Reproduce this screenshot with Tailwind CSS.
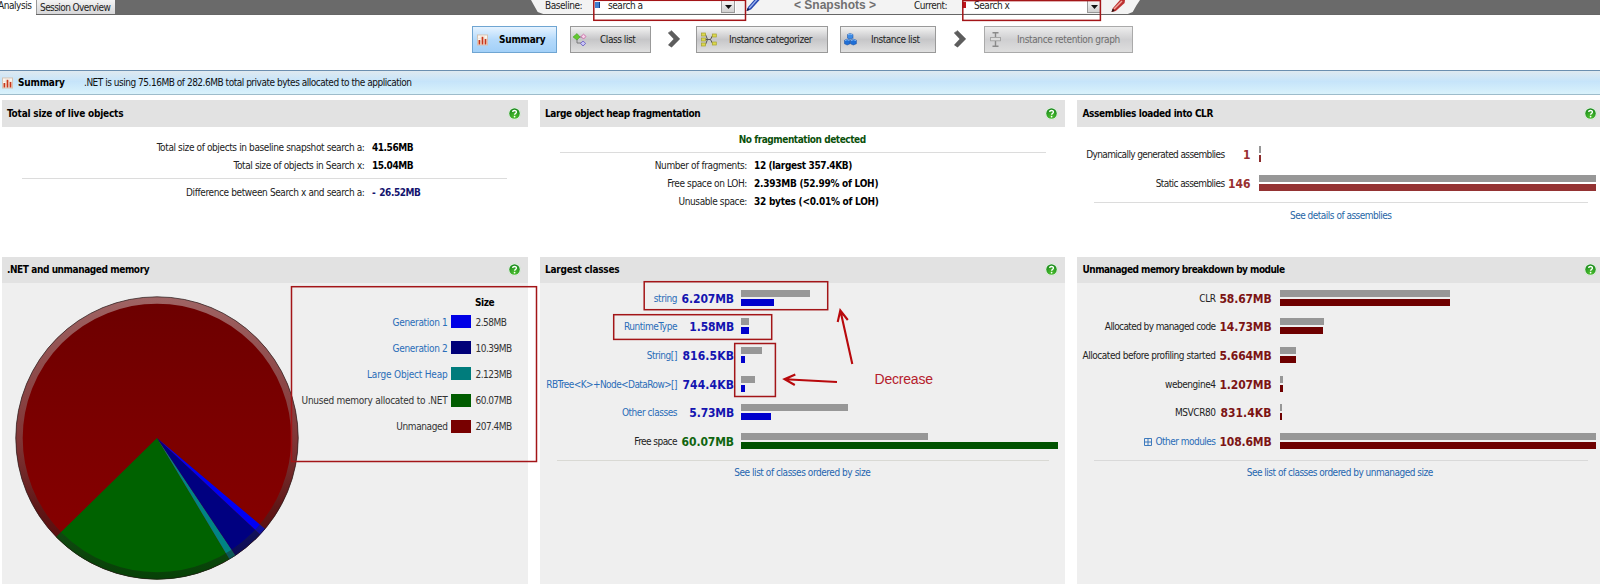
<!DOCTYPE html>
<html lang="en">
<head>
<meta charset="utf-8">
<title>Session Overview</title>
<script src="https://cdn.jsdelivr.net/npm/@tailwindcss/browser@4"></script>
</head>
<body class="relative h-[584px] w-[1600px] overflow-hidden bg-white font-['DejaVu_Sans_Condensed','DejaVu_Sans',sans-serif] text-[10px] leading-[14px] tracking-[-0.45px] whitespace-nowrap text-[#222]">

<svg class="absolute size-0">
  <defs>
    <radialGradient id="hg" cx=".5" cy=".8" r=".8"><stop offset="0" stop-color="#4fc22f"/><stop offset="1" stop-color="#17861c"/></radialGradient>
    <symbol id="help" viewBox="0 0 14 14">
      <circle cx="7" cy="7" r="6.6" fill="#fff" stroke="#b9d9b9" stroke-width=".5"/>
      <circle cx="7" cy="7" r="5.7" fill="url(#hg)"/>
      <path d="M5 5.5C5 3.2 9.1 3.2 9.1 5.4C9.1 6.9 7.1 6.8 7.1 8.4" fill="none" stroke="#fff" stroke-width="1.4"/>
      <circle cx="7.1" cy="10.3" r=".9" fill="#fff"/>
    </symbol>
    <symbol id="chart" viewBox="0 0 12 12">
      <rect x=".5" y=".5" width="11" height="11" fill="#fbf6f0" stroke="#d3bfae"/>
      <path d="M.5 4.2H11.5M.5 8H11.5M4.2 .5V11.5M8 .5V11.5" stroke="#e6d8cc" stroke-width=".6"/>
      <path d="M2.6 11V6M6 11V2.5M9.3 11V4.8" stroke="#c8371b" stroke-width="1.9"/>
    </symbol>
    <symbol id="chev" viewBox="0 0 14 18">
      <path d="M1 3L4.6 .6L13 9L4.6 17.4L1 15L6.6 9Z" fill="#5d5d5d"/>
      <path d="M1 3L4.6 .6L13 9" fill="none" stroke="#8b8b8b" stroke-width=".7"/>
    </symbol>
  </defs>
</svg>

<!-- Tab strip and snapshot selector -->
<header class="flex h-[15px] items-start border-b border-[#666] bg-[#6a6a6a]">
  <div class="flex h-[15px] w-9 items-start bg-white"><span class="-ml-[2px] -mt-[1px]">Analysis</span></div>
  <div class="h-[14px] w-[79px] border-l border-[#999] bg-gradient-to-b from-[#f4f4f4] to-[#d6d6d8] pl-[3px]"><span class="block pt-px leading-[13px] tracking-[-0.58px]">Session Overview</span></div>
  <div class="ml-[416px] flex h-[14px] w-[609px] items-start bg-[#f3f3f3] pl-[14px] [clip-path:polygon(0_0,100%_0,99.4%_40%,98.8%_85%,98%_100%,2%_100%,1.1%_85%,.5%_40%)]">
    <span class="w-[49px] -mt-[1px]">Baseline:</span>
    <div class="flex h-[13px] w-[142px] bg-white">
      <span class="ml-[1px] mt-[2px] h-[6px] w-[5px] border-r border-[#123f86] bg-[#3f7fd0]"></span>
      <span class="-mt-[1px] ml-[8px] w-[113px]">search a</span>
      <span class="flex h-[13px] w-[14px] items-center justify-center border border-[#999] bg-gradient-to-b from-[#f6f6f6] to-[#d0d0d0]"><svg width="7" height="4"><path d="M0 0H7L3.5 4Z" fill="#111"/></svg></span>
    </div>
    <svg class="ml-[10px]" width="15" height="12" viewBox="0 0 15 12"><path d="M.5 11L2 7L9 -1L14.5 -1L5 9.4Z" fill="#2747b0"/><path d="M3.2 8.2L11 -.5" stroke="#9db5ee" stroke-width="1.3"/><path d="M.5 11L1.6 8L3.6 9.9Z" fill="#111a44"/></svg>
    <span class="ml-[33px] -mt-[2px] w-[119px] font-['Liberation_Sans'] text-[12px] font-bold tracking-normal text-[#707070]">&lt; Snapshots &gt;</span>
    <span class="ml-px w-[48px] -mt-[1px]">Current:</span>
    <div class="flex h-[13px] w-[139px] bg-white">
      <span class="mt-[2px] h-[6px] w-[4px] bg-[#c0141c]"></span>
      <span class="-mt-[1px] ml-[8px] w-[113px]">Search x</span>
      <span class="flex h-[13px] w-[14px] items-center justify-center border border-[#999] bg-gradient-to-b from-[#f6f6f6] to-[#d0d0d0]"><svg width="7" height="4"><path d="M0 0H7L3.5 4Z" fill="#111"/></svg></span>
    </div>
    <svg class="ml-[10px]" width="15" height="13" viewBox="0 0 15 13"><path d="M.5 12L2 8L9 0L14 0L13.6 3L4.8 11Z" fill="#bd3030"/><path d="M3 9L11 1" stroke="#f0a9a0" stroke-width="1.4"/><path d="M.5 12L1.7 8.6L3.9 10.9Z" fill="#2c1414"/></svg>
  </div>
</header>

<!-- Navigation -->
<nav class="flex h-[55px] items-start pl-[472px] pt-[11px] text-[#222]">
  <div class="flex h-[27px] w-[85px] items-center border border-[#6fa5d2] bg-gradient-to-b from-[#e6f3ff] via-[#b5dafb] to-[#a2d0f8] pl-[4px] font-bold tracking-[-0.25px] text-black"><svg width="11" height="12"><use href="#chart"/></svg><span class="ml-[11px] mt-px">Summary</span></div>
  <div class="ml-[13px] flex h-[27px] w-[81px] items-center border border-[#999] bg-gradient-to-b from-[#f3f3f3] via-[#c6c6c8] to-[#e0e0e0] pl-[2px]">
    <svg width="14" height="14" viewBox="0 0 14 14"><path d="M4 4V10H9M4 4H10" fill="none" stroke="#666" stroke-width=".8"/><path d="M0 4L4 .5L7 4L4 7Z" fill="#63c82f" stroke="#3f9b22" stroke-width=".5"/><path d="M8 3.5L10.5 1.2L13 3.5L10.5 6Z" fill="#f7d3ea" stroke="#c65ea0" stroke-width=".8"/><path d="M7.5 10.4L10 8L12.7 10.4L10 13Z" fill="#c8c3f5" stroke="#6558c0" stroke-width=".8"/></svg>
    <span class="ml-[13px] mt-px">Class list</span></div>
  <svg class="ml-[16px] mt-[4px]" width="14" height="18"><use href="#chev"/></svg>
  <div class="ml-[15px] flex h-[27px] w-[132px] items-center border border-[#999] bg-gradient-to-b from-[#f3f3f3] via-[#c6c6c8] to-[#e0e0e0] pl-[4px]">
    <svg width="16" height="15" viewBox="0 0 16 15"><path d="M4.5 2.5L6.5 7.5L4.5 12.5M4.5 7.5H9.5L11.5 3.5M9.5 7.5L11.5 11.5" fill="none" stroke="#555" stroke-width="1"/><g fill="#dbd84e" stroke="#a5a12e" stroke-width=".7"><rect x=".5" y="1" width="4" height="3"/><rect x=".5" y="6" width="4" height="3"/><rect x=".5" y="11" width="4" height="3"/><rect x="11.3" y="2" width="4" height="3"/><rect x="11.3" y="10" width="4" height="3"/></g></svg>
    <span class="ml-[12px] mt-px">Instance categorizer</span></div>
  <div class="ml-[12px] flex h-[27px] w-[96px] items-center border border-[#999] bg-gradient-to-b from-[#f3f3f3] via-[#c6c6c8] to-[#e0e0e0] pl-[3px]">
    <svg width="13" height="13" viewBox="0 0 13 13"><g stroke="#1149a0" stroke-width=".5"><path d="M3.5 1.5L6 .4L9 1.5V5L6 6.3L3.5 5Z" fill="#3c8be6"/><path d="M.5 7.3L3.2 6L6 7.3V10.8L3.2 12L.5 10.8Z" fill="#1f6fd6"/><path d="M6.5 7.3L9.3 6L12.4 7.3V10.8L9.3 12L6.5 10.8Z" fill="#1f6fd6"/></g><path d="M4 1.8L6 1L8.5 1.8M1 7.6L3.2 6.7L5.5 7.6M7 7.6L9.3 6.7L12 7.6" stroke="#9cc9fa" stroke-width=".8" fill="none"/></svg>
    <span class="ml-[14px] mt-px">Instance list</span></div>
  <svg class="ml-[17px] mt-[4px]" width="14" height="18"><use href="#chev"/></svg>
  <div class="ml-[17px] flex h-[27px] w-[149px] items-center border border-[#aaa] bg-gradient-to-b from-[#ededed] via-[#cfcfd1] to-[#dedede] pl-[5px] text-[#6e6e6e]">
    <svg width="11" height="15" viewBox="0 0 11 15"><path d="M2.5 .8H8.5M5.5 .8V5M5.5 9V14M2.5 14.2H8.5" stroke="#8a8a8a" stroke-width="1.4"/><rect x=".6" y="5.4" width="9.8" height="3.4" fill="#ddd" stroke="#999" stroke-width=".8"/></svg>
    <span class="ml-[16px] mt-px tracking-[-0.35px]">Instance retention graph</span></div>
</nav>

<!-- Summary strip -->
<div class="flex h-[25px] items-center border-y border-t-[#6c8fb0] border-b-[#9dbccb] bg-gradient-to-b from-[#dfe9f0] via-[#c6e4fa] via-45% to-[#d9f2fb] pl-[2px] text-[#111]">
  <svg width="11" height="12"><use href="#chart"/></svg>
  <b class="ml-[5px] w-[66px] tracking-[-0.2px] text-black">Summary</b>
  <span class="tracking-[-0.48px]">.NET is using 75.16MB of 282.6MB total private bytes allocated to the application</span>
</div>

<main class="grid w-[1604px] grid-cols-[525.5px_525.5px_525.5px] grid-rows-[156.7px_327.3px] gap-x-[12px] pl-[2px] pt-[5px]">

  <section>
    <h2 class="flex h-[27px] items-center justify-between bg-[#e2e2e2] pl-[5px] pr-[7px] font-bold tracking-[-0.21px] text-black">Total size of live objects<svg width="13" height="13"><use href="#help"/></svg></h2>
    <div class="flex flex-col pt-[12px]">
      <div class="flex h-[18px] items-center"><span class="w-[362.5px] text-right tracking-[-0.38px]">Total size of objects in baseline snapshot search a:</span><b class="ml-[7.5px] text-black">41.56MB</b></div>
      <div class="flex h-[18px] items-center"><span class="w-[362.5px] text-right tracking-[-0.38px]">Total size of objects in Search x:</span><b class="ml-[7.5px] text-black">15.04MB</b></div>
      <div class="ml-[20px] mt-[3px] h-px w-[485px] bg-[#dcdcdc]"></div>
      <div class="mt-[5px] flex h-[18px] items-center"><span class="w-[362.5px] text-right tracking-[-0.38px]">Difference between Search x and search a:</span><b class="ml-[7.5px] text-[#14146e]">-<span class="ml-[4px]">26.52MB</span></b></div>
    </div>
  </section>

  <section>
    <h2 class="flex h-[27px] items-center justify-between bg-[#e2e2e2] pl-[5.5px] pr-[7px] font-bold tracking-[-0.4px] text-black">Large object heap fragmentation<svg width="13" height="13"><use href="#help"/></svg></h2>
    <div class="flex flex-col pt-[3px]">
      <b class="h-[18px] pt-px text-center leading-[18px] text-[#0b500b]">No fragmentation detected</b>
      <div class="ml-[20px] mt-[4px] h-px w-[486px] bg-[#dcdcdc]"></div>
      <div class="mt-[4px] flex h-[18px] items-center"><span class="w-[207.5px] text-right tracking-[-0.38px]">Number of fragments:</span><b class="ml-[7px] tracking-[-0.35px] text-black">12 (largest 357.4KB)</b></div>
      <div class="flex h-[18px] items-center"><span class="w-[207.5px] text-right tracking-[-0.38px]">Free space on LOH:</span><b class="ml-[7px] tracking-[-0.25px] text-black">2.393MB (52.99% of LOH)</b></div>
      <div class="flex h-[18px] items-center"><span class="w-[207.5px] text-right tracking-[-0.38px]">Unusable space:</span><b class="ml-[7px] tracking-[-0.25px] text-black">32 bytes (&lt;0.01% of LOH)</b></div>
    </div>
  </section>

  <section>
    <h2 class="flex h-[27px] items-center justify-between bg-[#e2e2e2] pl-[5.5px] pr-[6px] font-bold tracking-[-0.37px] text-black">Assemblies loaded into CLR<svg width="13" height="13"><use href="#help"/></svg></h2>
    <div class="flex flex-col pt-[13px]">
      <div class="flex h-[28.67px] items-center"><span class="mt-[2px] w-[147.5px] text-right tracking-[-0.61px]">Dynamically generated assemblies</span><b class="mt-[2px] w-[26px] text-right text-[12px] tracking-normal text-[#983030]">1</b><div class="ml-[8.5px] flex flex-col gap-[2px]"><i class="h-[7px] w-[2px] bg-[#979797]"></i><i class="h-[7px] w-[2px] bg-[#8b2c2c]"></i></div></div>
      <div class="flex h-[28.67px] items-center"><span class="mt-[2px] w-[147.5px] text-right tracking-[-0.58px]">Static assemblies</span><b class="mt-[2px] w-[26px] text-right text-[12px] tracking-normal text-[#983030]">146</b><div class="ml-[8.5px] flex flex-col gap-[2px]"><i class="h-[7px] w-[337px] bg-[#979797]"></i><i class="h-[7px] w-[337px] bg-[#943333]"></i></div></div>
      <div class="ml-[17px] mt-[5px] h-px w-[494px] bg-[#dcdcdc]"></div>
      <a class="mt-[4px] h-[18px] pl-[2px] text-center leading-[18px] tracking-[-0.5px] text-[#1f66a6]">See details of assemblies</a>
    </div>
  </section>

  <section class="bg-[#efefef]">
    <h2 class="flex h-[26px] items-center justify-between bg-[#e2e2e2] pl-[5px] pr-[7px] font-bold tracking-[-0.42px] text-black"><span class="mt-px">.NET and unmanaged memory</span><svg width="13" height="13"><use href="#help"/></svg></h2>
    <div class="flex">
      <svg class="ml-[12px] mt-[12px] shrink-0" width="286" height="286" viewBox="-143 -143 286 286">
        <defs>
          <linearGradient id="red" x1="0" y1="0" x2="0" y2="1"><stop offset="0" stop-color="#6c0000"/><stop offset=".45" stop-color="#7b0000"/><stop offset="1" stop-color="#8a0000"/></linearGradient>
          <linearGradient id="ring" x1="0" y1="0" x2="0" y2="1"><stop offset="0" stop-color="#ddd" stop-opacity=".45"/><stop offset=".5" stop-color="#888" stop-opacity=".4"/><stop offset=".75" stop-color="#333" stop-opacity=".45"/><stop offset="1" stop-color="#111" stop-opacity=".4"/></linearGradient>
        </defs>
        <circle r="141.3" fill="url(#red)"/>
        <path d="M0 0L-101 99A141.3 141.3 0 0 0 72.5 121.3Z" fill="#006200"/>
        <path d="M0 0L72.5 121.3A141.3 141.3 0 0 0 78.5 117.5Z" fill="#008484"/>
        <path d="M0 0L78.5 117.5A141.3 141.3 0 0 0 103.2 96.5Z" fill="#000080"/>
        <path d="M0 0L103.2 96.5A141.3 141.3 0 0 0 108.2 91Z" fill="#0000f4"/>
        <circle r="137.8" fill="none" stroke="url(#ring)" stroke-width="7"/>
        <circle r="141.2" fill="none" stroke="#201818" stroke-opacity=".65"/>
      </svg>
      <div class="-ml-[2px] flex w-[227px] flex-col pt-[13px] tracking-[-0.26px] text-[#333]">
        <b class="ml-[177px] h-[13px] tracking-[-0.45px] text-black">Size</b>
        <div class="flex h-[26.1px] items-center"><span class="mt-[2px] w-[149.5px] text-right tracking-[-0.32px] text-[#2a6db8]">Generation 1</span><i class="ml-[3.5px] h-[13px] w-[20px] bg-[#0000e6]"></i><span class="ml-[4.5px] mt-[2px] tracking-[-0.5px]">2.58MB</span></div>
        <div class="flex h-[26.1px] items-center"><span class="mt-[2px] w-[149.5px] text-right tracking-[-0.32px] text-[#2a6db8]">Generation 2</span><i class="ml-[3.5px] h-[13px] w-[20px] bg-[#000078]"></i><span class="ml-[4.5px] mt-[2px] tracking-[-0.5px]">10.39MB</span></div>
        <div class="flex h-[26.1px] items-center"><span class="mt-[2px] w-[149.5px] text-right tracking-[-0.2px] text-[#2a6db8]">Large Object Heap</span><i class="ml-[3.5px] h-[13px] w-[20px] bg-[#007c7c]"></i><span class="ml-[4.5px] mt-[2px] tracking-[-0.5px]">2.123MB</span></div>
        <div class="flex h-[26.1px] items-center"><span class="mt-[2px] w-[149.5px] text-right">Unused memory allocated to .NET</span><i class="ml-[3.5px] h-[13px] w-[20px] bg-[#005c00]"></i><span class="ml-[4.5px] mt-[2px] tracking-[-0.5px]">60.07MB</span></div>
        <div class="flex h-[26.1px] items-center"><span class="mt-[2px] w-[149.5px] text-right tracking-[-0.4px]">Unmanaged</span><i class="ml-[3.5px] h-[13px] w-[20px] bg-[#780000]"></i><span class="ml-[4.5px] mt-[2px] tracking-[-0.5px]">207.4MB</span></div>
      </div>
    </div>
  </section>

  <section class="bg-[#efefef]">
    <h2 class="flex h-[26px] items-center justify-between bg-[#e2e2e2] pl-[5.5px] pr-[7px] font-bold tracking-[-0.26px] text-black"><span class="mt-px">Largest classes</span><svg width="13" height="13"><use href="#help"/></svg></h2>
    <div class="flex flex-col pt-[0.6px]">
      <div class="flex h-[28.7px] items-center"><span class="mt-[2px] w-[137.5px] text-right text-[#2a6db8]">string</span><b class="mt-[2px] w-[57px] text-right text-[12px] tracking-[-0.1px] text-[#1414b0]">6.207MB</b><div class="ml-[7px] flex flex-col gap-[2px]"><i class="h-[7px] w-[69px] bg-[#979797]"></i><i class="h-[7px] w-[33px] bg-[#0000cc]"></i></div></div>
      <div class="flex h-[28.7px] items-center"><span class="mt-[2px] w-[137.5px] text-right text-[#2a6db8]">RuntimeType</span><b class="mt-[2px] w-[57px] text-right text-[12px] tracking-[-0.16px] text-[#1414b0]">1.58MB</b><div class="ml-[7px] flex flex-col gap-[2px]"><i class="h-[7px] w-[8px] bg-[#979797]"></i><i class="h-[7px] w-[8px] bg-[#0000cc]"></i></div></div>
      <div class="flex h-[28.7px] items-center"><span class="mt-[2px] w-[137.5px] text-right text-[#2a6db8]">String[]</span><b class="mt-[2px] w-[57px] text-right text-[12px] tracking-[0.12px] text-[#1414b0]">816.5KB</b><div class="ml-[7px] flex flex-col gap-[2px]"><i class="h-[7px] w-[21px] bg-[#979797]"></i><i class="h-[7px] w-[4px] bg-[#0000cc]"></i></div></div>
      <div class="flex h-[28.7px] items-center"><span class="mt-[2px] w-[137.5px] text-right tracking-[-0.58px] text-[#2a6db8]">RBTree&lt;K&gt;+Node&lt;DataRow&gt;[]</span><b class="mt-[2px] w-[57px] text-right text-[12px] tracking-[0.12px] text-[#1414b0]">744.4KB</b><div class="ml-[7px] flex flex-col gap-[2px]"><i class="h-[7px] w-[14px] bg-[#979797]"></i><i class="h-[7px] w-[4px] bg-[#0000cc]"></i></div></div>
      <div class="flex h-[28.7px] items-center"><span class="mt-[2px] w-[137.5px] text-right text-[#2a6db8]">Other classes</span><b class="mt-[2px] w-[57px] text-right text-[12px] tracking-[-0.16px] text-[#1414b0]">5.73MB</b><div class="ml-[7px] flex flex-col gap-[2px]"><i class="h-[7px] w-[107px] bg-[#979797]"></i><i class="h-[7px] w-[30px] bg-[#0000cc]"></i></div></div>
      <div class="flex h-[28.7px] items-center"><span class="mt-[2px] w-[137.5px] text-right tracking-[-0.55px]">Free space</span><b class="mt-[2px] w-[57px] text-right text-[12px] tracking-[-0.1px] text-[#0f650f]">60.07MB</b><div class="ml-[7px] flex flex-col gap-[2px]"><i class="h-[7px] w-[187px] bg-[#979797]"></i><i class="h-[7px] w-[317px] bg-[#005200]"></i></div></div>
      <div class="ml-[17px] mt-[5px] h-px w-[492px] bg-[#d9d9d4]"></div>
      <a class="mt-[3px] h-[18px] text-center leading-[18px] text-[#1f66b0]">See list of classes ordered by size</a>
    </div>
  </section>

  <section class="bg-[#efefef]">
    <h2 class="flex h-[26px] items-center justify-between bg-[#e2e2e2] pl-[5.5px] pr-[6px] font-bold tracking-[-0.52px] text-black"><span class="mt-px">Unmanaged memory breakdown by module</span><svg width="13" height="13"><use href="#help"/></svg></h2>
    <div class="flex flex-col pt-[0.6px]">
      <div class="flex h-[28.7px] items-center"><span class="mt-[2px] w-[138.5px] text-right">CLR</span><b class="mt-[2px] w-[56px] text-right text-[12px] tracking-[-0.16px] text-[#7c1414]">58.67MB</b><div class="ml-[8.5px] flex flex-col gap-[2px]"><i class="h-[7px] w-[170px] bg-[#979797]"></i><i class="h-[7px] w-[170px] bg-[#6e0000]"></i></div></div>
      <div class="flex h-[28.7px] items-center"><span class="mt-[2px] w-[138.5px] text-right tracking-[-0.6px]">Allocated by managed code</span><b class="mt-[2px] w-[56px] text-right text-[12px] tracking-[-0.16px] text-[#7c1414]">14.73MB</b><div class="ml-[8.5px] flex flex-col gap-[2px]"><i class="h-[7px] w-[44px] bg-[#979797]"></i><i class="h-[7px] w-[43px] bg-[#6e0000]"></i></div></div>
      <div class="flex h-[28.7px] items-center"><span class="mt-[2px] w-[138.5px] text-right">Allocated before profiling started</span><b class="mt-[2px] w-[56px] text-right text-[12px] tracking-[-0.16px] text-[#7c1414]">5.664MB</b><div class="ml-[8.5px] flex flex-col gap-[2px]"><i class="h-[7px] w-[16px] bg-[#979797]"></i><i class="h-[7px] w-[16px] bg-[#6e0000]"></i></div></div>
      <div class="flex h-[28.7px] items-center"><span class="mt-[2px] w-[138.5px] text-right">webengine4</span><b class="mt-[2px] w-[56px] text-right text-[12px] tracking-[-0.16px] text-[#7c1414]">1.207MB</b><div class="ml-[8.5px] flex flex-col gap-[2px]"><i class="h-[7px] w-[3px] bg-[#979797]"></i><i class="h-[7px] w-[3px] bg-[#6e0000]"></i></div></div>
      <div class="flex h-[28.7px] items-center"><span class="mt-[2px] w-[138.5px] text-right">MSVCR80</span><b class="mt-[2px] w-[56px] text-right text-[12px] tracking-[0.05px] text-[#7c1414]">831.4KB</b><div class="ml-[8.5px] flex flex-col gap-[2px]"><i class="h-[7px] w-[2px] bg-[#979797]"></i><i class="h-[7px] w-[2px] bg-[#6e0000]"></i></div></div>
      <div class="flex h-[28.7px] items-center"><span class="mt-[2px] flex w-[138.5px] items-center justify-end gap-[3px] tracking-[-0.52px] text-[#2a6db8]"><svg width="8" height="8" viewBox="0 0 8 8"><path d="M.5 .5H7.5V7.5H.5ZM4 .5V7.5M.5 4H7.5" fill="none" stroke="#2a6db8" stroke-width=".9"/></svg>Other modules</span><b class="mt-[2px] w-[56px] text-right text-[12px] tracking-[-0.16px] text-[#7c1414]">108.6MB</b><div class="ml-[8.5px] flex flex-col gap-[2px]"><i class="h-[7px] w-[316px] bg-[#979797]"></i><i class="h-[7px] w-[316px] bg-[#6e0000]"></i></div></div>
      <div class="ml-[17px] mt-[5px] h-px w-[494px] bg-[#d9d9d9]"></div>
      <a class="mt-[3px] h-[18px] text-center leading-[18px] tracking-[-0.5px] text-[#1f66b0]">See list of classes ordered by unmanaged size</a>
    </div>
  </section>
</main>

<!-- Annotations drawn over the page -->
<svg class="pointer-events-none absolute left-0 top-0" width="1600" height="584" fill="none" stroke="#a31518" stroke-width="1.5">
  <rect x="593.8" y=".3" width="151.7" height="20"/>
  <rect x="962.8" y=".6" width="137.6" height="19.8"/>
  <rect x="291.5" y="286.7" width="245" height="174.8"/>
  <rect x="644.2" y="281.7" width="183.5" height="28"/>
  <rect x="613.7" y="314.7" width="158" height="24.7"/>
  <rect x="734.7" y="343.5" width="40.7" height="53"/>
  <g stroke="#b8090c" stroke-width="2.1">
    <path d="M852.3 364L840.5 311M837.7 322L840.3 310.5L847.8 320"/>
    <path d="M837 382L785 379.2M795.3 374.5L784.5 379.2L794.8 385"/>
  </g>
</svg>
<span class="absolute left-[874.5px] top-[370px] font-['Liberation_Sans'] text-[14px] leading-[18px] tracking-[-0.2px] text-[#b5202c]">Decrease</span>
</body>
</html>
